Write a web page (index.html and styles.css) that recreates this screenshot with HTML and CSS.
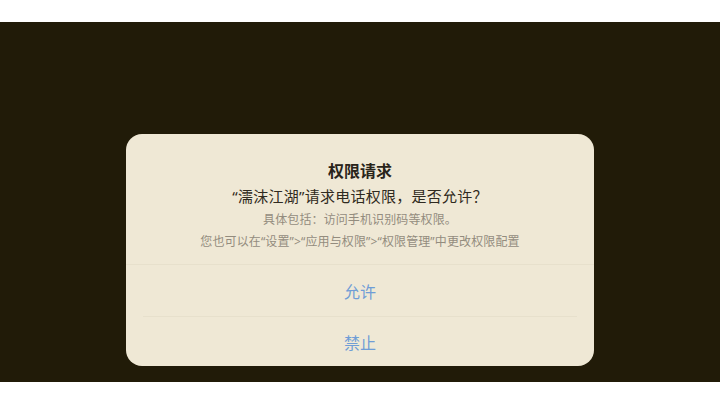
FILE: index.html
```html
<!DOCTYPE html>
<html lang="zh-CN">
<head>
<meta charset="utf-8">
<link rel="stylesheet" href="styles.css">
</head>
<body>
<div class="screen">
  <div class="dialog">
    <div class="header">
      <div class="title">权限请求</div>
      <div class="subtitle">“濡沫江湖”请求电话权限，是否允许？</div>
      <div class="note">具体包括：访问手机识别码等权限。</div>
      <div class="note">您也可以在“设置”&gt;“应用与权限”&gt;“权限管理”中更改权限配置</div>
    </div>
    <div class="btn first">允许</div>
    <div class="sep"></div>
    <div class="btn last">禁止</div>
  </div>
</div>
</body>
</html>
```
FILE: styles.css
```css
html, body {
  margin: 0;
  padding: 0;
  background: #ffffff;
  font-family: "Noto Sans", "Noto Sans CJK SC", sans-serif;
}
.screen {
  margin-top: 22px;
  height: 360px;
  background: #211b08;
  display: flex;
  flex-direction: column;
  justify-content: flex-end;
  align-items: center;
  padding-bottom: 16px;
  box-sizing: border-box;
}
.dialog {
  width: 468px;
  background: #efe8d5;
  border-radius: 16px;
  display: flex;
  flex-direction: column;
}
.header {
  padding: 25px 16px 11px;
  text-align: center;
  border-bottom: 1px solid #e7e0cc;
}
.title {
  font-size: 16px;
  line-height: 24px;
  font-weight: 700;
  color: #29241a;
}
.subtitle {
  font-size: 15px;
  line-height: 26px;
  letter-spacing: 0.25px;
  color: #2f2a20;
}
.note {
  font-size: 12px;
  line-height: 22px;
  letter-spacing: 0.12px;
  color: #938c7e;
}
.btn {
  display: flex;
  align-items: center;
  justify-content: center;
  font-size: 16px;
  color: #6f9dd6;
}
.btn.first { height: 51px; }
.btn.last { height: 49px; }
.sep {
  height: 1px;
  margin: 0 17px;
  background: #e7e0cc;
}
```
